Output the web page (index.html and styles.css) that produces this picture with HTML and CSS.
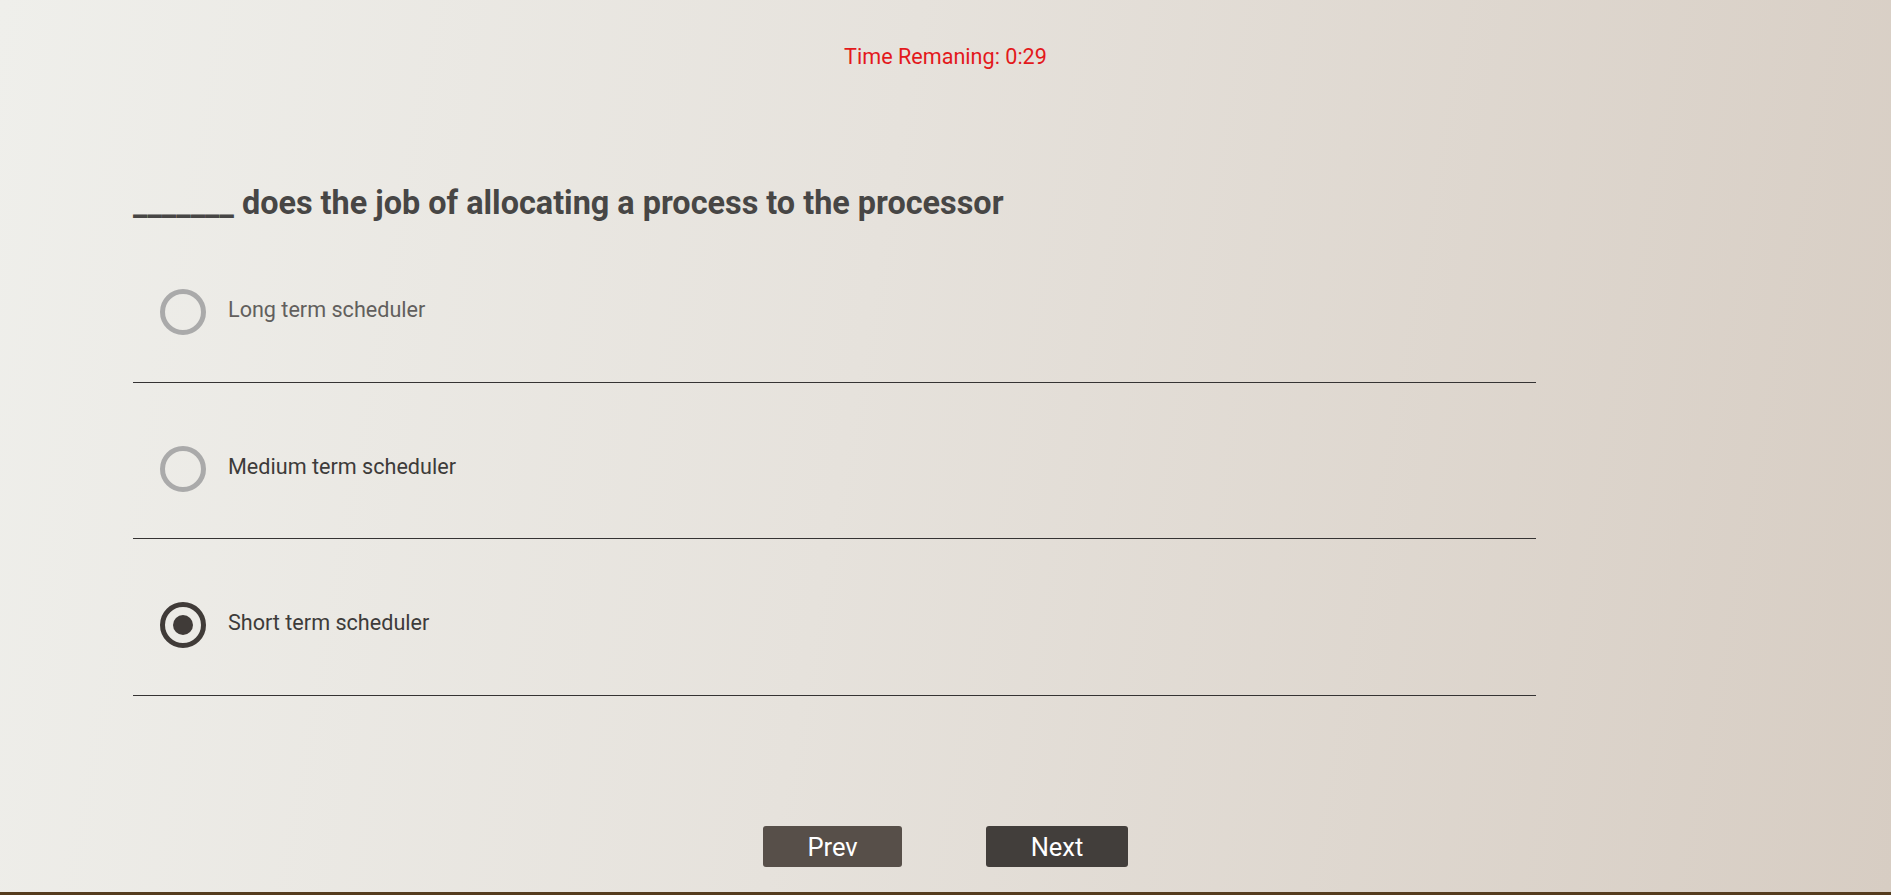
FILE: index.html
```html
<!DOCTYPE html>
<html lang="en">
<head>
<meta charset="utf-8">
<title>Quiz</title>
<link rel="stylesheet" href="styles.css">
</head>
<body>
<div class="page">
  <div class="timer">Time Remaning: 0:29</div>
  <div class="quiz">
    <h2 class="question">_______ does the job of allocating a process to the processor</h2>
    <label class="option option-muted">
      <input type="radio" name="q" class="radio">
      <span class="label">Long term scheduler</span>
    </label>
    <label class="option">
      <input type="radio" name="q" class="radio">
      <span class="label">Medium term scheduler</span>
    </label>
    <label class="option">
      <input type="radio" name="q" class="radio" checked>
      <span class="label">Short term scheduler</span>
    </label>
  </div>
  <div class="nav">
    <button class="btn btn-prev">Prev</button>
    <button class="btn btn-next">Next</button>
  </div>
</div>
</body>
</html>
```

FILE: styles.css
```css
html, body {
  margin: 0;
  padding: 0;
}

body {
  font-family: Roboto, "Liberation Sans", sans-serif;
}

.page {
  box-sizing: border-box;
  height: 100vh;
  display: flex;
  flex-direction: column;
  background: linear-gradient(100deg, #efefeb 0%, #e6e2dc 45%, #d7cdc3 100%);
  border-bottom: 3px solid #553c1e;
}

.timer {
  padding-top: 44px;
  text-align: center;
  color: #e3191c;
  font-size: 21.6px;
  line-height: 25px;
}

.quiz {
  margin-left: 133px;
  width: 1403px;
}

.question {
  margin: 114.5px 0 4.5px 0;
  font-size: 32.4px;
  line-height: 38px;
  font-weight: 700;
  color: #474645;
}

.option {
  display: flex;
  align-items: flex-start;
  gap: 22px;
  padding: 63px 0 46.5px 27px;
  border-bottom: 1px solid #353333;
  cursor: pointer;
}

.radio {
  appearance: none;
  -webkit-appearance: none;
  box-sizing: border-box;
  margin: 0;
  width: 46px;
  height: 46px;
  border-radius: 50%;
  border: 5px solid #aaaaaa;
  background: transparent;
  display: flex;
  align-items: center;
  justify-content: center;
  flex: none;
}

.radio:checked {
  border-color: #403b38;
}

.radio:checked::after {
  content: "";
  width: 20px;
  height: 20px;
  border-radius: 50%;
  background: #403b38;
}

.label {
  margin-top: 8px;
  font-size: 21.6px;
  line-height: 25px;
  color: #3d3b3a;
}

.option-muted .label {
  color: #625f5d;
}

.nav {
  display: flex;
  justify-content: center;
  gap: 84px;
  margin-top: 130.5px;
}

.btn {
  height: 41px;
  border: none;
  border-radius: 3px;
  padding: 2px 0 0 0;
  color: #ffffff;
  font-family: Roboto, "Liberation Sans", sans-serif;
  font-size: 25.5px;
  line-height: 39px;
  cursor: pointer;
}

.btn-prev {
  width: 139px;
  background: #574f49;
}

.btn-next {
  width: 142px;
  background: #423e3b;
}
```
